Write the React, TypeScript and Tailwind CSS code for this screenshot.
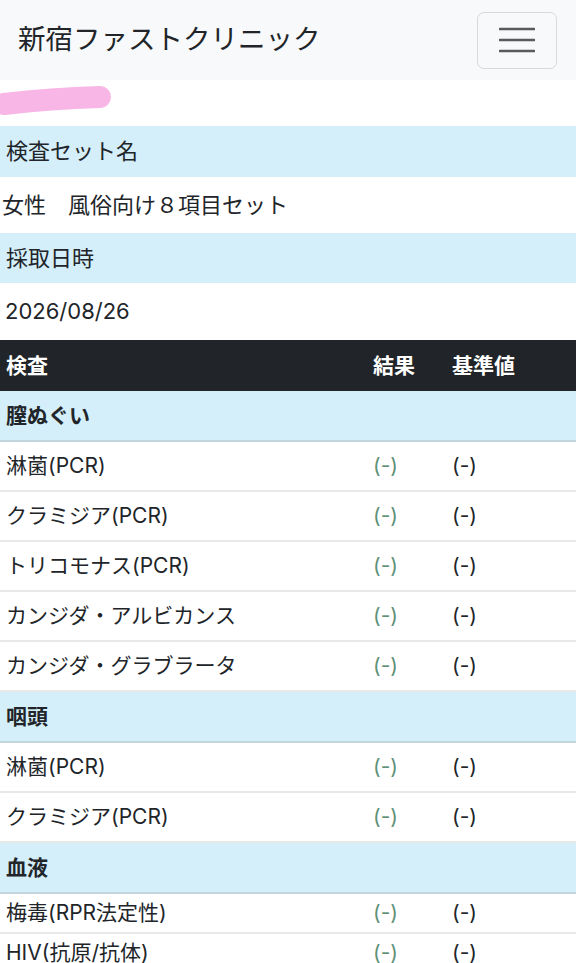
import React from 'react';

type Row = { name: string; result?: string; standard?: string; group?: boolean; h?: string };

const rows: Row[] = [
  { name: '膣ぬぐい', group: true },
  { name: '淋菌(PCR)', result: '(-)', standard: '(-)' },
  { name: 'クラミジア(PCR)', result: '(-)', standard: '(-)' },
  { name: 'トリコモナス(PCR)', result: '(-)', standard: '(-)' },
  { name: 'カンジダ・アルビカンス', result: '(-)', standard: '(-)' },
  { name: 'カンジダ・グラブラータ', result: '(-)', standard: '(-)' },
  { name: '咽頭', group: true },
  { name: '淋菌(PCR)', result: '(-)', standard: '(-)' },
  { name: 'クラミジア(PCR)', result: '(-)', standard: '(-)' },
  { name: '血液', group: true },
  { name: '梅毒(RPR法定性)', result: '(-)', standard: '(-)', h: 'h-[40px]' },
  { name: 'HIV(抗原/抗体)', result: '(-)', standard: '(-)', h: 'h-[40px]' },
];

export default function App() {
  return (
    <div
      className="min-h-screen bg-white text-[#212529] overflow-hidden"
      style={{ fontFamily: 'Inter, "Noto Sans CJK JP", sans-serif' }}
    >
      {/* navbar */}
      <nav className="h-[80px] bg-[#f8f9fa] flex items-center justify-between pl-[18px] pr-[19px]">
        <span className="text-[27.5px] tracking-[0px] text-[#212529]">新宿ファストクリニック</span>
        <button className="w-[80px] h-[57px] border border-[#d9d9d9] rounded-[7px] flex items-center justify-center">
          <svg width="36" height="28" viewBox="0 0 36 28">
            <path d="M1 3h34M1 14h34M1 25h34" stroke="#5a5a5a" strokeWidth="2.6" strokeLinecap="round" />
          </svg>
        </button>
      </nav>

      {/* redacted name */}
      <div className="h-[46px] relative">
        <svg className="absolute left-0 top-[6px]" width="120" height="34" viewBox="0 0 120 34">
          <path d="M4 18 C30 15, 70 12, 100 11" stroke="#f8b6e6" strokeWidth="22" strokeLinecap="round" fill="none" />
        </svg>
      </div>

      {/* info */}
      <div className="h-[51px] bg-[#d4eefa] flex items-center px-[6px] text-[22px]">検査セット名</div>
      <div className="h-[56px] flex items-center px-[2px] text-[22px]">女性　風俗向け８項目セット</div>
      <div className="h-[50px] bg-[#d4eefa] flex items-center px-[6px] text-[22px]">採取日時</div>
      <div className="h-[57px] flex items-center px-[5px] text-[22px]">2026/08/26</div>

      {/* table */}
      <div className="h-[51px] bg-[#212529] text-white font-bold flex items-center text-[21px]">
        <div className="w-[367px] pl-[6px]">検査</div>
        <div className="w-[79px] pl-[6px]">結果</div>
        <div className="flex-1 pl-[6px]">基準値</div>
      </div>
      {rows.map((r, i) =>
        r.group ? (
          <div
            key={i}
            className="h-[51px] bg-[#d4eefa] border-b-2 border-[#c3d6de] flex items-center pl-[6px] text-[21px] font-bold"
          >
            {r.name}
          </div>
        ) : (
          <div
            key={i}
            className={`${r.h ?? 'h-[50px]'} border-b-2 border-[#e6e8ea] flex items-center text-[21px]`}
          >
            <div className="w-[367px] pl-[6px] whitespace-nowrap">{r.name}</div>
            <div className="w-[79px] pl-[6px] text-[#5f9178]">{r.result}</div>
            <div className="flex-1 pl-[6px]">{r.standard}</div>
          </div>
        )
      )}
    </div>
  );
}
